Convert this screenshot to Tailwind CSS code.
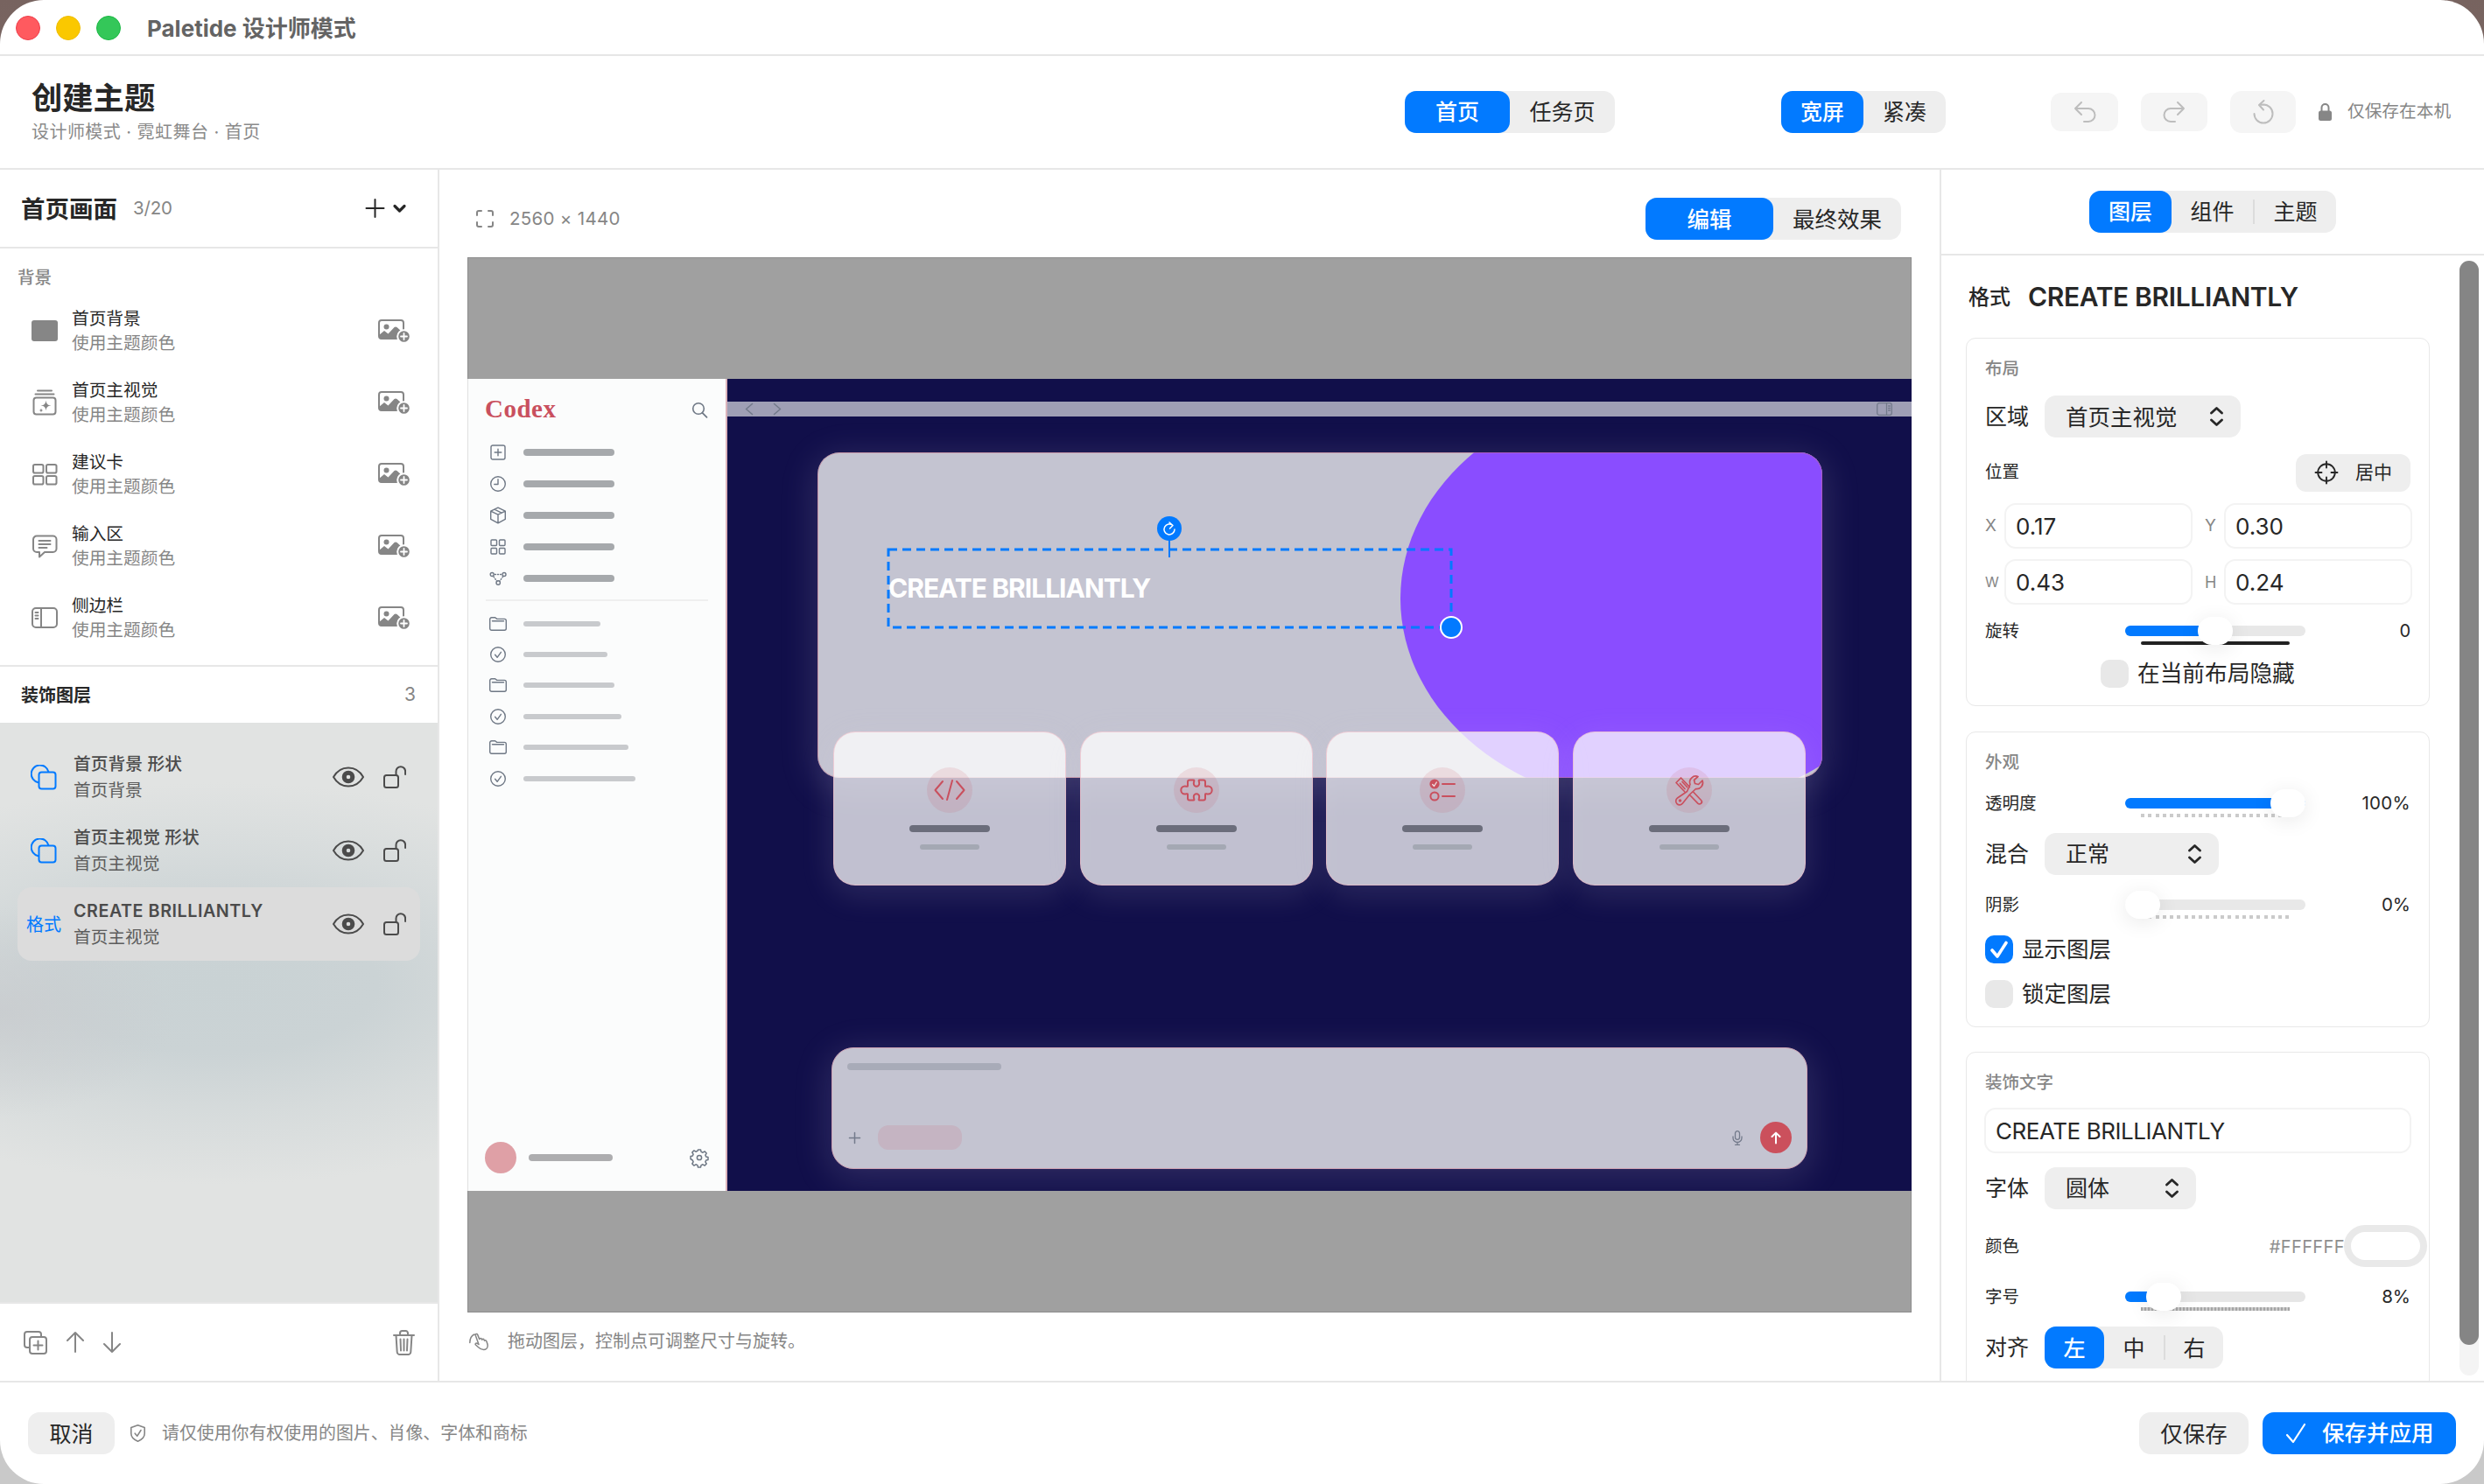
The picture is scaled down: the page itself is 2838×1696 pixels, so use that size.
<!DOCTYPE html>
<html lang="zh-CN">
<head>
    <meta charset="UTF-8">
    <meta name="viewport" content="width=device-width, initial-scale=1.0">
    <title>Paletide 设计师模式</title>
    <script src="https://cdn.jsdelivr.net/npm/@tailwindcss/browser@4"></script>
    <style>
        body {
            font-family: 'Inter', 'Noto Sans CJK SC', sans-serif;
        }
        /* 图标统一使用描边 */
        .ic {
            fill: none;
            stroke: currentColor;
            stroke-width: 2;
            stroke-linecap: round;
            stroke-linejoin: round;
            overflow: visible;
            flex-shrink: 0;
        }
    </style>
</head>
<body class="w-[2838px] h-[1696px] overflow-hidden bg-[linear-gradient(180deg,#77635f_0%,#8a8380_50%,#c9c9c9_98%)] text-[#272727]">

    <!-- 图标库 -->
    <svg class="hidden">
        <symbol id="i-photo" viewBox="0 0 36 26">
            <path d="M29 12V4a3 3 0 0 0-3-3H4a3 3 0 0 0-3 3v15a3 3 0 0 0 3 3h18"/>
            <circle cx="9.500" cy="8.500" r="3" fill="currentColor" stroke="none"/>
            <path d="M1 18l6-5 4.500 3.500 7-7.500q1.500-1 3 0l5.500 5-2 8.500H4a3 3 0 0 1-3-3z" fill="currentColor" stroke="none"/>
            <circle cx="29.500" cy="19.500" r="7.300" fill="currentColor" stroke="#fff" stroke-width="2"/>
            <path d="M29.500 16v7M26 19.500h7" stroke="#fff" stroke-width="1.800"/>
        </symbol>
        <symbol id="i-eye" viewBox="0 0 36 24">
            <path d="M1 12C5 5 11 1.500 18 1.500S31 5 35 12c-4 7-10 10.500-17 10.500S5 19 1 12z"/>
            <circle cx="18" cy="12" r="4.800" stroke-width="5"/>
        </symbol>
        <symbol id="i-unlock" viewBox="0 0 26 26">
            <rect x="1" y="11" width="16" height="14" rx="2.500"/>
            <path d="M14.500 11V6.500a5.300 5.300 0 0 1 10.600 0V10"/>
        </symbol>
        <symbol id="i-shape" viewBox="0 0 30 30">
            <path d="M8.500 20.200A10 10 0 1 1 20.400 8"/>
            <rect x="9.500" y="8.500" width="19" height="19" rx="3"/>
        </symbol>
        <symbol id="i-updown" viewBox="0 0 15 22">
            <path d="M1.500 7l6-5.500 6 5.500M1.500 15l6 5.500 6-5.500" stroke-width="2.800"/>
        </symbol>
        <symbol id="i-folder" viewBox="0 0 20 16">
            <path d="M.7 3A2 2 0 0 1 2.700.8h4l2 1.600h8.600a2 2 0 0 1 2 2v8.900a2 2 0 0 1-2 2H2.700a2 2 0 0 1-2-2zM3.500 4.800h13"/>
        </symbol>
        <symbol id="i-done" viewBox="0 0 18 18">
            <circle cx="9" cy="9" r="8.300"/>
            <path d="M5.600 9.300l2.500 3 4.300-6"/>
        </symbol>
    </svg>

    <div class="flex flex-col w-[2838px] h-[1696px] rounded-[50px] bg-white overflow-hidden">

        <!-- 标题栏 -->
        <div class="h-16 shrink-0 flex items-center pl-[18px] border-b-2 border-[#e6e6e6]">
            <div class="flex gap-[18px] pt-px">
                <div class="size-7 rounded-full bg-[#ff5a5f] border border-[#ee3f4c]"></div>
                <div class="size-7 rounded-full bg-[#fac800] border border-[#efbd00]"></div>
                <div class="size-7 rounded-full bg-[#34c759] border border-[#1cb845]"></div>
            </div>
            <div class="ml-[30px] pt-[3px] text-[26px] font-bold text-[#646464] leading-8">Paletide 设计师模式</div>
        </div>

        <!-- 顶部工具栏 -->
        <header class="h-[130px] shrink-0 flex items-center border-b-2 border-[#e7e7e7]">
            <div class="w-[1605px] pl-9">
                <h1 class="text-[35.300px] leading-[44px] font-bold">创建主题</h1>
                <p class="text-[20px] leading-[28px] tracking-[0.450px] text-[#8a8a8a] mt-[2px]">设计师模式 · 霓虹舞台 · 首页</p>
            </div>
            <div class="w-[240px] h-12 flex rounded-[13px] bg-[#eeeeee] text-[25px] leading-[49px] text-center">
                <div class="w-[120px] h-12 rounded-[13px] bg-[#027aff] text-white font-medium">首页</div>
                <div class="w-[120px] h-12">任务页</div>
            </div>
            <div class="ml-[190px] w-[188px] h-12 flex rounded-[13px] bg-[#eeeeee] text-[25px] leading-[49px] text-center">
                <div class="w-[94px] h-12 rounded-[13px] bg-[#027aff] text-white font-medium">宽屏</div>
                <div class="w-[94px] h-12">紧凑</div>
            </div>
            <div class="ml-[120px] flex items-center gap-[26px] text-[#bdbdbd]">
                <div class="w-[77px] h-11 rounded-xl bg-[#f5f5f5] flex items-center justify-center">
                    <svg class="ic" width="24" height="24" viewBox="0 0 24 24"><path d="M8 1L1 8l7 7M1 8h15a7 7 0 0 1 0 15h-5"/></svg>
                </div>
                <div class="w-[76px] h-11 rounded-xl bg-[#f5f5f5] flex items-center justify-center">
                    <svg class="ic" width="24" height="24" viewBox="0 0 24 24"><path d="M16 1l7 7-7 7M23 8H8a7 7 0 0 0 0 15h5"/></svg>
                </div>
                <div class="w-[75px] h-12 rounded-[13px] bg-[#f5f5f5] flex items-center justify-center">
                    <svg class="ic" width="24" height="28" viewBox="0 0 24 28"><path d="M1.500 16A10.500 10.500 0 1 0 12 5.500L7 6M12.500 1L7 6l5 5.500"/></svg>
                </div>
            </div>
            <svg class="ml-[26px] text-[#868686]" width="15" height="20" viewBox="0 0 15 20"><rect x="0" y="8.500" width="15" height="11.500" rx="2.500" fill="currentColor"/><path d="M3.500 9V5a4 4 0 0 1 8 0v4" fill="none" stroke="currentColor" stroke-width="2"/></svg>
            <span class="ml-[18px] text-[19.700px] text-[#868686]">仅保存在本机</span>
        </header>

        <div class="flex h-[1384px] shrink-0">

            <!-- 左侧栏 -->
            <aside class="w-[502px] shrink-0 flex flex-col border-r-2 border-[#e7e7e7]">
                <div class="h-[90px] flex items-center pl-6 border-b-2 border-[#e7e7e7]">
                    <h2 class="pt-[3px] text-[27.500px] font-bold">首页画面</h2>
                    <span class="ml-[18px] text-[20.500px] tracking-[-0.2px] text-[#868686]">3/20</span>
                    <svg class="ic ml-auto mr-[36px]" width="46" height="22" viewBox="0 0 46 22"><path d="M10.500 1v20M.5 11h20"/><path d="M33 8.500l5.500 5.500L44 8.500" stroke-width="3.200"/></svg>
                </div>
                <div class="h-[478px] pt-[19px] border-b-2 border-[#e7e7e7]">
                    <div class="pl-5 mb-[6px] text-[19.500px] leading-[29px] h-7 font-medium text-[#868686]">背景</div>
                    <div id="bg-list"></div>
                </div>
                <div class="h-16 flex items-center justify-between pl-6 pr-[25px]">
                    <span class="pt-px text-[20px] font-bold">装饰图层</span>
                    <span class="text-[21px] text-[#868686]">3</span>
                </div>
                <div id="layer-list" class="h-[664px] px-5 pt-5 border-b-2 border-[#e7e7e7] bg-[radial-gradient(ellipse_200px_120px_at_0%_50%,rgba(200,203,206,0.8)_0%,transparent_100%),radial-gradient(ellipse_520px_230px_at_50%_45%,#c9d2d4_0%,#cbd3d5_35%,rgba(210,216,217,0.7)_65%,transparent_100%)] bg-[#e1e3e2]"></div>
                <div class="flex-1 flex items-center pl-[27px] pr-[26px] text-[#868686]">
                    <svg class="ic" width="27" height="27" viewBox="0 0 27 27"><path d="M6 19H4a3 3 0 0 1-3-3V4a3 3 0 0 1 3-3h13a3 3 0 0 1 3 3v2"/><rect x="7" y="7" width="19" height="19" rx="3"/><path d="M16.500 11.500v10M11.500 16.500h10"/></svg>
                    <svg class="ic ml-[22px]" width="20" height="24" viewBox="0 0 20 24"><path d="M10 23V1M1 10l9-9 9 9"/></svg>
                    <svg class="ic ml-[22px]" width="20" height="24" viewBox="0 0 20 24"><path d="M10 1v22M1 14l9 9 9-9"/></svg>
                    <svg class="ic ml-auto" width="25" height="29" viewBox="0 0 25 29"><path d="M1 6h23M8 6V3.500A2.500 2.500 0 0 1 10.500 1h4A2.500 2.500 0 0 1 17 3.500V6M3.500 6l1.200 19a3 3 0 0 0 3 3h9.600a3 3 0 0 0 3-3L21.500 6M8.500 10.500l.5 13M12.500 10.500v13M16.500 10.500l-.5 13"/></svg>
                </div>
            </aside>

            <!-- 画布 -->
            <main class="w-[1714px] shrink-0 px-8">
                <div class="h-[100px] pt-3 pl-[10px] pr-3 flex items-center">
                    <svg class="ic text-[#868686]" width="20" height="20" viewBox="0 0 20 20"><path d="M1 6V3a2 2 0 0 1 2-2h3M14 1h3a2 2 0 0 1 2 2v3M19 14v3a2 2 0 0 1-2 2h-3M6 19H3a2 2 0 0 1-2-2v-3"/></svg>
                    <span class="ml-[18px] text-[20.500px] tracking-[0.3px] text-[#868686]">2560 × 1440</span>
                    <div class="ml-auto w-[292px] h-12 flex rounded-[13px] bg-[#eeeeee] text-[25.500px] leading-[49px] text-center">
                        <div class="w-[146px] h-12 rounded-[13px] bg-[#027aff] text-white font-medium">编辑</div>
                        <div class="w-[146px] h-12">最终效果</div>
                    </div>
                </div>

                <div class="h-[1206px] bg-[#a0a0a0] border border-[#8d8d8d] pt-[138px]">
                    <div class="relative -mx-px w-[1650px] h-[928px] bg-[#110f4a] overflow-hidden">

                        <!-- 预览：侧边栏 -->
                        <div class="absolute left-0 top-0 w-[297px] h-full flex flex-col bg-[#fbfcfc] border-l border-l-[#e0e0e0] border-r-2 border-r-[#dbb3bb] text-[#6f7885]">
                            <div class="h-[66px] pl-[19px] pr-[21px] pt-[5px] flex items-center justify-between">
                                <span class="-mt-[3px] text-[29px] tracking-[0.5px] font-bold text-[#c9505e] font-['Liberation_Serif'] leading-8">Codex</span>
                                <svg class="ic" width="17" height="18" viewBox="0 0 17 18"><circle cx="7" cy="7" r="6.300" stroke-width="1.600"/><path d="M11.500 11.800l5 5" stroke-width="1.800"/></svg>
                            </div>
                            <div id="nav-list"></div>
                            <div class="mx-5 mt-[6px] mb-[8px] h-[2px] bg-[#efefef]"></div>
                            <div id="task-list"></div>
                            <div class="mt-auto mb-5 pl-[19px] pr-[20px] flex items-center">
                                <div class="size-9 rounded-full bg-[#dfa0a6]"></div>
                                <div class="ml-[14px] w-24 h-2 rounded-full bg-[#adadaf]"></div>
                                <svg class="ic ml-auto" width="20" height="20" viewBox="0 0 20 20"><path d="M8.500 1h3l.6 2.400 1.900.8 2.100-1.300 2.100 2.100-1.300 2.100.8 1.900 2.300.5v3l-2.300.5-.8 1.900 1.300 2.100-2.100 2.100-2.100-1.300-1.900.8-.6 2.400h-3l-.6-2.400-1.900-.8-2.100 1.300-2.100-2.100 1.300-2.100-.8-1.900L0 11.500v-3L2.300 8l.8-1.900L1.800 4l2.100-2.100L6 3.200l1.900-.8z" stroke-width="1.500"/><circle cx="10" cy="10" r="2.600" stroke-width="1.500"/></svg>
                            </div>
                        </div>

                        <!-- 预览：顶栏 -->
                        <div class="absolute left-[297px] right-0 top-[26px] h-[17px] bg-[#9f9fb5] flex items-center pl-[21px] pr-[22px] text-[#737a8b]">
                            <svg class="ic" width="8" height="13" viewBox="0 0 8 13"><path d="M7.500 .5L.5 6.500l7 6" stroke-width="1.600"/></svg>
                            <svg class="ic ml-6" width="8" height="13" viewBox="0 0 8 13"><path d="M.5 .5l7 6-7 6" stroke-width="1.600"/></svg>
                            <svg class="ic ml-auto" width="18" height="15" viewBox="0 0 18 15"><path d="M3 .7h12a2.300 2.300 0 0 1 2.300 2.300v9a2.300 2.300 0 0 1-2.300 2.300H3A2.300 2.300 0 0 1 .7 12V3A2.300 2.300 0 0 1 3 .7zM11.500 .7v13.600M13.600 4h1.800M13.600 6.500h1.800M13.600 9h1.800" stroke-width="1.300"/></svg>
                        </div>

                        <!-- 预览：主视觉 -->
                        <div class="absolute left-[400px] top-[84px] w-[1148px] h-[372px] rounded-[25px] shadow-[0_8px_40px_4px_rgba(205,190,225,0.16)]">
                            <div class="relative w-full h-full rounded-[25px] overflow-hidden bg-[#c4c4d1]">
                                <div class="absolute left-[666px] top-[-73px] w-[598px] h-[480px] rounded-[50%] bg-[#8a4dff]"></div>
                                <div class="absolute inset-0 rounded-[25px] border border-[#cb6a80]/50"></div>
                            </div>
                        </div>

                        <!-- 预览：建议卡 -->
                        <div id="card-grid" class="absolute left-[418px] top-[403px] w-[1111px] grid grid-cols-4 gap-[15.700px]"></div>

                        <!-- 预览：输入区 -->
                        <div class="absolute left-[416px] top-[764px] w-[1115px] h-[139px] rounded-[25px] bg-[#c4c4d1] border border-[#cfa3b4] shadow-[0_8px_40px_4px_rgba(205,190,225,0.16)] pl-[17px] pr-[17px] pt-[17px] flex flex-col">
                            <div class="w-[176px] h-2 rounded-full bg-[#a8abb8]"></div>
                            <div class="mt-[59px] h-9 flex items-center text-[#737a8b]">
                                <svg class="ic ml-[2px]" width="13" height="13" viewBox="0 0 14 14"><path d="M7 .5v13M.5 7h13" stroke-width="1.600"/></svg>
                                <div class="ml-[20px] w-24 h-7 rounded-xl bg-[#c5b4c2]"></div>
                                <svg class="ic ml-auto" width="12" height="17" viewBox="0 0 12 17"><path d="M6 .7a2.500 2.500 0 0 1 2.500 2.500v4.600a2.500 2.500 0 0 1-5 0V3.200A2.500 2.500 0 0 1 6 .7zM1 7v1.500a5 5 0 0 0 10 0V7M6 13.500v2.800M3.500 16.300h5" stroke-width="1.300"/></svg>
                                <div class="ml-5 size-9 rounded-full bg-[#cb505c] flex items-center justify-center text-white">
                                    <svg class="ic" width="12" height="13" viewBox="0 0 12 13"><path d="M6 12.500V.8M1.500 5L6 .6 10.500 5" stroke-width="2"/></svg>
                                </div>
                            </div>
                        </div>

                        <!-- 选中图层 -->
                        <div class="absolute left-[481px] top-[221px] h-[36px] text-[30px] leading-[36px] font-bold text-white tracking-[-1px] whitespace-nowrap">CREATE BRILLIANTLY</div>
                        <svg class="absolute left-[481px] top-[195px] overflow-visible" width="643" height="89">
                            <rect x="0" y="0" width="643" height="89" fill="none" stroke="#027aff" stroke-width="3" stroke-dasharray="10 6"/>
                            <path d="M321-12V9" stroke="#027aff" stroke-width="2"/>
                            <circle cx="321" cy="-24" r="14" fill="#027aff"/>
                            <path d="M325-27.500a6 6 0 1 0 2 4.500M321-31l4 3.500-3.500 3.500" fill="none" stroke="#fff" stroke-width="1.500" stroke-linecap="round" stroke-linejoin="round"/>
                            <circle cx="643" cy="89" r="12" fill="#027aff" stroke="#fff" stroke-width="2"/>
                        </svg>
                    </div>
                </div>

                <div class="h-[66px] flex items-center pl-[2px] text-[#868686]">
                    <svg class="ic" width="22" height="20" viewBox="0 0 22 20"><path d="M.8 11.500C.8 7 2.500 3.500 6 2M11 13.500L7.300 3.300c-.6-1.800 1.700-2.600 2.400-.9l2 5M11.800 7.500c.2-1.300 2-1.500 2.500-.2l.4 1c.3-1.200 2-1.300 2.400 0l.4 1c.5-1 1.800-.8 2.200.3.700 1.800 1.500 3.500 1.500 5.200 0 2.700-2 4.700-4.700 4.700-2.500 0-4.500-1.300-6.200-3L7.500 14c-1-1.200.5-2.600 1.700-1.700l1.800 1.200" stroke-width="1.500"/></svg>
                    <span class="ml-[22px] text-[20px]">拖动图层，控制点可调整尺寸与旋转。</span>
                </div>
            </main>

            <!-- 右侧属性面板 -->
            <aside class="flex-1 border-l-2 border-[#e7e7e7] flex flex-col">
                <div class="h-[98px] shrink-0 flex items-center pl-[169px] border-b-2 border-[#e7e7e7]">
                    <div class="w-[282px] h-12 flex items-center rounded-[13px] bg-[#eeeeee] text-[25px] leading-[49px] text-center">
                        <div class="w-[94px] h-12 rounded-[13px] bg-[#027aff] text-white font-medium">图层</div>
                        <div class="w-[93px] h-12">组件</div>
                        <div class="w-[2px] h-7 bg-[#dcdcdc]"></div>
                        <div class="w-[93px] h-12">主题</div>
                    </div>
                </div>
                <div class="relative flex-1 min-h-0 overflow-hidden pl-7">
                    <div class="h-[94px] flex items-center pl-[3px]">
                        <span class="pt-[2px] text-[24px] font-medium">格式</span>
                        <span class="ml-5 text-[30px] font-semibold tracking-[-0.350px]">CREATE BRILLIANTLY</span>
                    </div>

                    <!-- 布局 -->
                    <section class="w-[530px] h-[421px] rounded-[11px] border border-[#e8e8e8] px-[21px] pt-5">
                        <div class="text-[19.500px] leading-7 font-medium text-[#868686]">布局</div>
                        <div class="mt-[17px] h-12 flex items-center">
                            <span class="w-[68px] pt-[2px] text-[25px]">区域</span>
                            <div class="w-[224px] h-12 rounded-[13px] bg-[#eeeeee] flex items-center justify-between pl-6 pr-5 text-[25.500px]"><span class="pt-[2px]">首页主视觉</span><svg class="ic" width="15" height="22"><use href="#i-updown"/></svg></div>
                        </div>
                        <div class="mt-[18px] h-11 flex items-center justify-between">
                            <span class="text-[19.500px]">位置</span>
                            <div class="w-[131px] h-[43px] rounded-xl bg-[#eeeeee] flex items-center pl-[22px]">
                                <svg class="ic" width="26" height="26" viewBox="0 0 26 26"><circle cx="13" cy="13" r="9.800" stroke-width="1.900"/><path d="M13 .5v7M13 18.500v7M.5 13h7M18.500 13h7" stroke-width="1.900"/></svg>
                                <span class="ml-5 text-[21px]">居中</span>
                            </div>
                        </div>
                        <div class="mt-[13px] h-[52px] flex items-center text-[26px] w-[488px]">
                            <span class="w-[22px] text-[19px] text-[#868686]">X</span>
                            <div class="w-[215px] h-[52px] leading-[49px] rounded-[13px] border-2 border-[#f3f3f3] pl-[11px]">0.17</div>
                            <span class="ml-[14px] w-[22px] text-[19px] text-[#868686]">Y</span>
                            <div class="w-[215px] h-[52px] leading-[49px] rounded-[13px] border-2 border-[#f3f3f3] pl-[11px]">0.30</div>
                        </div>
                        <div class="mt-3 h-[52px] flex items-center text-[26px] w-[488px]">
                            <span class="w-[22px] text-[16px] text-[#868686] tracking-tighter">W</span>
                            <div class="w-[215px] h-[52px] leading-[49px] rounded-[13px] border-2 border-[#f3f3f3] pl-[11px]">0.43</div>
                            <span class="ml-[14px] w-[22px] text-[18px] text-[#868686]">H</span>
                            <div class="w-[215px] h-[52px] leading-[49px] rounded-[13px] border-2 border-[#f3f3f3] pl-[11px]">0.24</div>
                        </div>
                        <div class="mt-4 h-7 flex items-center text-[20px]">
                            <span class="w-[160px] pt-px text-[19.500px]">旋转</span>
                            <div class="relative w-[206px] h-3 rounded-full bg-[#e8e8e8]">
                                <div class="w-[100px] h-3 rounded-full bg-[#027aff]"></div>
                                <div class="absolute left-[18px] top-[18px] w-[170px] h-1 bg-[#222222] rounded-full"></div>
                                <div class="absolute left-[83px] -top-[10px] w-10 h-8 rounded-full bg-white shadow-[0_4px_24px_rgba(0,0,0,0.09)]"></div>
                            </div>
                            <span class="ml-auto">0</span>
                        </div>
                        <div class="mt-[19px] ml-[132px] h-8 flex items-center text-[25.700px]">
                            <div class="size-8 rounded-[10px] bg-[#e8e8e8] mr-[10px]"></div><span class="pt-px">在当前布局隐藏</span>
                        </div>
                    </section>

                    <!-- 外观 -->
                    <section class="mt-[29px] w-[530px] h-[338px] rounded-[11px] border border-[#e8e8e8] px-[21px] pt-5">
                        <div class="text-[19.500px] leading-7 font-medium text-[#868686]">外观</div>
                        <div class="mt-[19px] h-7 flex items-center text-[20.500px]">
                            <span class="w-[160px] pt-px text-[19.500px]">透明度</span>
                            <div class="relative w-[206px] h-3 rounded-full bg-[#027aff]">
                                <div class="absolute left-[18px] top-[18px] w-[170px] h-1 bg-[repeating-linear-gradient(90deg,#cbcbcb_0_4px,transparent_4px_8.27px)]"></div>
                                <div class="absolute right-0 -top-[10px] w-10 h-8 rounded-full bg-white shadow-[0_4px_24px_rgba(0,0,0,0.09)]"></div>
                            </div>
                            <span class="ml-auto tracking-[0.3px]">100%</span>
                        </div>
                        <div class="mt-5 h-12 flex items-center">
                            <span class="w-[68px] pt-[2px] text-[25px]">混合</span>
                            <div class="w-[199px] h-12 rounded-[13px] bg-[#eeeeee] flex items-center justify-between pl-6 pr-5 text-[25px]"><span class="pt-[2px]">正常</span><svg class="ic" width="15" height="22"><use href="#i-updown"/></svg></div>
                        </div>
                        <div class="mt-5 h-7 flex items-center text-[20.500px]">
                            <span class="w-[160px] pt-px text-[19.500px]">阴影</span>
                            <div class="relative w-[206px] h-3 rounded-full bg-[#e8e8e8]">
                                <div class="absolute left-[18px] top-[18px] w-[170px] h-1 bg-[repeating-linear-gradient(90deg,#cbcbcb_0_4px,transparent_4px_8.27px)]"></div>
                                <div class="absolute left-0 -top-[10px] w-10 h-8 rounded-full bg-white shadow-[0_4px_24px_rgba(0,0,0,0.09)]"></div>
                            </div>
                            <span class="ml-auto">0%</span>
                        </div>
                        <div class="mt-[21px] h-8 flex items-center text-[25.500px]">
                            <div class="size-8 rounded-[10px] bg-[#027aff] mr-[10px] flex items-center justify-center text-white">
                                <svg class="ic" width="20" height="20" viewBox="0 0 20 20"><path d="M2 11l6 7L18 2.500" stroke-width="3.600"/></svg>
                            </div>显示图层
                        </div>
                        <div class="mt-[19px] h-8 flex items-center text-[25.500px]">
                            <div class="size-8 rounded-[10px] bg-[#e8e8e8] mr-[10px]"></div><span class="pt-px">锁定图层</span>
                        </div>
                    </section>

                    <!-- 装饰文字 -->
                    <section class="mt-7 w-[530px] h-[440px] rounded-[11px] border border-[#e8e8e8] px-[21px] pt-5">
                        <div class="text-[19.500px] leading-7 font-medium text-[#868686]">装饰文字</div>
                        <div class="mt-[15px] -mx-px h-[52px] leading-[50px] rounded-[13px] border-2 border-[#f3f3f3] pl-[11px] text-[26px] tracking-[-0.450px]">CREATE BRILLIANTLY</div>
                        <div class="mt-4 h-12 flex items-center">
                            <span class="w-[68px] pt-[2px] text-[25px]">字体</span>
                            <div class="w-[173px] h-12 rounded-[13px] bg-[#eeeeee] flex items-center justify-between pl-6 pr-5 text-[25px]"><span class="pt-[2px]">圆体</span><svg class="ic" width="15" height="22"><use href="#i-updown"/></svg></div>
                        </div>
                        <div class="mt-[18px] h-12 w-[505px] flex items-center">
                            <span class="pt-px text-[19.500px]">颜色</span>
                            <span class="ml-auto -mr-px pt-px text-[20px] tracking-[0.4px] text-[#8f8f8f]">#FFFFFF</span>
                            <div class="relative w-[95px] h-12 rounded-full bg-white border-8 border-[#e9e9e9]"></div>
                        </div>
                        <div class="mt-5 h-7 flex items-center text-[20.500px]">
                            <span class="w-[160px] pt-px text-[19.500px]">字号</span>
                            <div class="relative w-[206px] h-3 rounded-full bg-[#e6e6e6]">
                                <div class="w-[40px] h-3 rounded-full bg-[#027aff]"></div>
                                <div class="absolute left-[18px] top-[18px] w-[170px] h-1 bg-[repeating-linear-gradient(90deg,#a6a6a6_0_2px,#cccccc_2px_4px)]"></div>
                                <div class="absolute left-6 -top-[10px] w-10 h-8 rounded-full bg-white shadow-[0_4px_24px_rgba(0,0,0,0.09)]"></div>
                            </div>
                            <span class="ml-auto">8%</span>
                        </div>
                        <div class="mt-5 h-12 flex items-center text-[25px]">
                            <span class="w-[68px] pt-[2px]">对齐</span>
                            <div class="w-[204px] h-12 flex items-center rounded-[13px] bg-[#eeeeee] leading-[50px] text-center">
                                <div class="w-[68px] h-12 rounded-[13px] bg-[#027aff] text-white font-medium">左</div>
                                <div class="w-[68px] h-12">中</div>
                                <div class="w-[2px] h-7 bg-[#dcdcdc]"></div>
                                <div class="w-[66px] h-12">右</div>
                            </div>
                        </div>
                    </section>

                    <!-- 滚动条 -->
                    <div class="absolute right-[6px] top-[6px] w-[22px] h-[1274px] rounded-full bg-[#f4f4f4]">
                        <div class="h-[1239px] rounded-full bg-[#858585]"></div>
                    </div>
                </div>
            </aside>
        </div>

        <!-- 底部操作栏 -->
        <footer class="flex-1 border-t-2 border-[#e7e7e7] flex items-center pl-8 pr-8">
            <div class="w-[99px] h-12 rounded-[13px] bg-[#eeeeee] text-[25px] leading-[50px] text-center">取消</div>
            <svg class="ic ml-[18px] text-[#868686]" width="17" height="20" viewBox="0 0 17 20"><path d="M8.500 .8l7.700 2.800v6.600c0 4-3 7-7.700 9-4.700-2-7.700-5-7.700-9V3.600zM5.200 10.200l2.600 3 4.200-6.700" stroke-width="1.600"/></svg>
            <span class="ml-[19px] pt-[2px] text-[19.900px] text-[#868686]">请仅使用你有权使用的图片、肖像、字体和商标</span>
            <div class="ml-auto w-[125px] h-12 rounded-[13px] bg-[#eeeeee] text-[25.500px] leading-[50px] text-center">仅保存</div>
            <div class="ml-4 w-[221px] h-12 rounded-[13px] bg-[#027aff] text-white text-[25.500px] font-medium flex items-center pl-[27px]">
                <svg class="ic mr-[19px]" width="22" height="22" viewBox="0 0 22 22"><path d="M1 13l7 8L21 1" stroke-width="2.200"/></svg><span class="pt-px">保存并应用</span>
            </div>
        </footer>
    </div>

    <script>
        // --- 背景区域 ---
        const backgrounds = [
            { name: '首页背景', icon: '<rect x="0" y="3" width="30" height="24" rx="3" fill="currentColor" stroke="none"/>' },
            { name: '首页主视觉', icon: '<path d="M7 1.500h16M4.500 5.500h21"/><rect x="2.500" y="9.500" width="25" height="19" rx="3"/><path d="M16.500 12.500c.5 4 1.700 5.500 6 6-4.300.5-5.500 2-6 6-.5-4-1.700-5.500-6-6 4.300-.5 5.500-2 6-6zM11 21.500c.3 1.500.8 2.200 2.500 2.500-1.700.3-2.200 1-2.500 2.500-.3-1.500-.8-2.200-2.500-2.500 1.700-.3 2.200-1 2.500-2.500z" fill="currentColor" stroke="none"/>' },
            { name: '建议卡', icon: '<rect x="2" y="4" width="11.500" height="9.500" rx="1.800"/><rect x="17" y="4" width="11.500" height="9.500" rx="1.800"/><rect x="2" y="17" width="11.500" height="9.500" rx="1.800"/><rect x="17" y="17" width="11.500" height="9.500" rx="1.800"/>' },
            { name: '输入区', icon: '<path d="M6 3.500h18.500a4 4 0 0 1 4 4V18a4 4 0 0 1-4 4H15l-6 5.500V22H6a4 4 0 0 1-4-4V7.500a4 4 0 0 1 4-4zM8.500 9h13M8.500 13h13M8.500 17h9"/>' },
            { name: '侧边栏', icon: '<rect x="1" y="4" width="28" height="22" rx="4"/><path d="M11 4v22M4.500 9h3M4.500 12.500h3M4.500 16h3"/>' }
        ];
        document.getElementById('bg-list').innerHTML = backgrounds.map(b => `
            <div class="h-[82px] flex items-center pl-9 pr-8">
                <svg class="ic text-[#868686]" width="30" height="30" viewBox="0 0 30 30">${b.icon}</svg>
                <div class="ml-4 text-[19.700px] leading-7">
                    <div>${b.name}</div>
                    <div class="text-[#868686]">使用主题颜色</div>
                </div>
                <svg class="ic ml-auto text-[#868686]" width="36" height="26"><use href="#i-photo"/></svg>
            </div>
        `).join('');

        // --- 装饰图层 ---
        const layers = [
            { name: '首页背景 形状', area: '首页背景' },
            { name: '首页主视觉 形状', area: '首页主视觉' },
            { name: 'CREATE BRILLIANTLY', area: '首页主视觉', selected: true }
        ];
        document.getElementById('layer-list').innerHTML = layers.map(l => `
            <div class="h-[84px] flex items-center rounded-2xl pr-4 text-[#4b4b4b] ${l.selected ? 'bg-[#dcdcdc]' : ''}">
                <div class="w-16 flex justify-center pr-[4px] pt-[2px] text-[#027aff]">
                    ${l.selected ? '<span class="text-[20px]">格式</span>' : '<svg class="ic" width="30" height="30"><use href="#i-shape"/></svg>'}
                </div>
                <div class="text-[19.700px] leading-[30px]">
                    <div class="${l.selected ? 'font-semibold tracking-[0.550px]' : 'font-medium tracking-[0.1px]'}">${l.name}</div>
                    <div class="text-[#5c5c5c]">${l.area}</div>
                </div>
                <svg class="ic ml-auto" width="36" height="24"><use href="#i-eye"/></svg>
                <svg class="ic ml-[22px]" width="26" height="26"><use href="#i-unlock"/></svg>
            </div>
        `).join('');

        // --- 预览侧边栏 ---
        const navIcons = [
            '<rect x="1" y="1" width="16" height="16" rx="2"/><path d="M9 5.200v7.600M5.200 9h7.600"/>',
            '<circle cx="9" cy="9" r="8.300"/><path d="M9 3.800V9.500H4.800"/>',
            '<path d="M9 .2l8.300 4v9.200L9 17.800.7 13.400V4.200zM.7 4.200L9 8.200l8.300-4M9 8.200v9.600M4.800 2.200l8.300 4"/>',
            '<rect x="1" y="1" width="6.500" height="6.500" rx="1"/><rect x="10.500" y="1" width="6.500" height="6.500" rx="1"/><rect x="1" y="10.500" width="6.500" height="6.500" rx="1"/><rect x="10.500" y="10.500" width="6.500" height="6.500" rx="1"/>',
            '<circle cx="2.200" cy="4.500" r="2"/><circle cx="16" cy="4.500" r="2"/><circle cx="9.200" cy="14" r="2.200"/><path d="M5.500 4.500h7.500M4 7l3.500 5M14.500 7l-3.500 5" stroke-dasharray="1 2"/>'
        ];
        document.getElementById('nav-list').innerHTML = navIcons.map(icon => `
            <div class="h-9 flex items-center pl-[25px]">
                <svg class="ic" width="18" height="18" viewBox="0 0 18 18"><g stroke-width="1.400">${icon}</g></svg>
                <div class="ml-5 w-[104px] h-2 rounded-full bg-[#a6a9ac]"></div>
            </div>
        `).join('');

        document.getElementById('task-list').innerHTML = [88, 96, 104, 112, 120, 128].map((w, i) => `
            <div class="h-[35.400px] flex items-center pl-6">
                <svg class="ic" width="20" height="18"><g stroke-width="1.400">${i % 2 ? '<use href="#i-done" width="20" height="18"/>' : '<use href="#i-folder" width="20" height="18"/>'}</g></svg>
                <div class="ml-[19px] h-[6px] rounded-full bg-[#c8cacd]" style="width:${w}px"></div>
            </div>
        `).join('');

        // --- 建议卡 ---
        const cardIcons = [
            '<path d="M10 8L1.500 18 10 28M26 8l8.500 10L26 28M21 7l-6 22"/>',
            '<path d="M10 6.500h4.500c1.800 0 .3 1.800.3 4a3.200 3.200 0 0 0 6.400 0c0-2.200-1.500-4 .3-4H26a2 2 0 0 1 2 2v4.500c0 1.600 1.300.5 3.200.5a3.800 3.800 0 0 1 0 9c-1.900 0-3.200-1.100-3.200.5v4.500a2 2 0 0 1-2 2h-4.500c-1.800 0-.3-1.800-.3-4a3.200 3.200 0 0 0-6.400 0c0 2.200 1.500 4-.3 4H10a2 2 0 0 1-2-2V23c0-1.600-1.300-.5-3.200-.5a3.800 3.800 0 0 1 0-9c1.900 0 3.200 1.100 3.200-.5V8.500a2 2 0 0 1 2-2z"/>',
            '<circle cx="9" cy="11" r="5.600" fill="currentColor" stroke="none"/><path d="M6.700 11.500l1.800 2 2.800-4.500" stroke="#ecdadd" stroke-width="1.400"/><circle cx="9" cy="25" r="4.600"/><path d="M18 11h14M18 25h14"/>',
            '<path d="M3 9.500l5.500-5.500 10 10.500M3 9.500l9.500 10M7.500 10.500l5.500 6M10 8.500l5.500 6M22.500 20l9 9.500a2.600 2.600 0 0 1-3.700 3.700L19 24M15.500 19.500L4.500 27a4.300 4.300 0 1 0 6 6L18.500 23l7-6.500a7 7 0 0 0 7.500-9.500l-4.500 4.500-4-1-1-4L28 2.500a7 7 0 0 0-9 9l-3.500 8z" stroke-width="1.700"/><circle cx="7.500" cy="30" r=".8"/>'
        ];
        document.getElementById('card-grid').innerHTML = cardIcons.map(icon => `
            <div class="h-[176px] rounded-[25px] bg-white/74 border border-[#eeb4bf]/60 shadow-[0_8px_36px_2px_rgba(215,205,225,0.14)] flex flex-col items-center pt-10">
                <div class="size-[52px] rounded-full bg-[#c9505e]/13 flex items-center justify-center text-[#c9505e]">
                    <svg class="ic" width="36" height="36" viewBox="0 0 36 36">${icon}</svg>
                </div>
                <div class="mt-[14px] w-[92px] h-2 rounded-full bg-[#6b6d7b]"></div>
                <div class="mt-[14px] w-[68px] h-[6px] rounded-full bg-[#a4a8b3]"></div>
            </div>
        `).join('');
    </script>
</body>
</html>
